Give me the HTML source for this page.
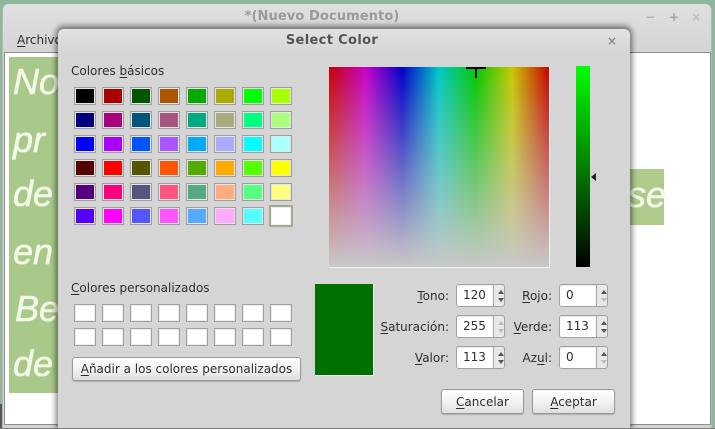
<!DOCTYPE html>
<html><head><meta charset="utf-8">
<style>
html,body{margin:0;padding:0}
body{width:715px;height:429px;overflow:hidden;position:relative;background:#8fb79b;font-family:"DejaVu Sans",sans-serif;font-size:12px;color:#2e2e2e}
div,span.a{position:absolute;box-sizing:border-box}
.t{white-space:nowrap;line-height:16px;height:16px}
.r{text-align:right}
u{text-underline-offset:2px;text-decoration-thickness:1px}
.s{width:22px;height:18px;border:1px solid #9c9c9c;outline:none;box-shadow:inset 0 0 0 1px #e6e6e6}
.c{width:22px;height:18px;border:1px solid #a0a0a0;background:#fff;box-shadow:inset 0 0 0 1px #ececec}
.btn{border:1px solid #9a9a9a;border-radius:3px;background:linear-gradient(#fefefe,#f2f2f2 55%,#dedede);box-shadow:0 1px 1px rgba(0,0,0,.18);text-align:center;white-space:nowrap}
.spin{width:49px;height:23px;border:1px solid #a2a2a2;border-radius:3px;background:#e8e8e8}
.spin .f{left:0;top:0;width:37px;height:21px;background:#fff;border-right:1px solid #a8a8a8;border-radius:2px 0 0 2px;box-shadow:inset 0 1px 1px rgba(0,0,0,.1);line-height:21px;font-size:12px;padding-left:6px}
.up,.dn{left:41px;width:0;height:0;border-left:3px solid transparent;border-right:3px solid transparent}
.up{top:5px;border-bottom:4px solid #555}
.dn{top:13px;border-top:4px solid #555}
.up.o{border-bottom-color:#bdbdbd}.dn.o{border-top-color:#bdbdbd}
.h{font-family:"Liberation Sans",sans-serif;font-style:italic;color:#f4f8e8;-webkit-text-stroke:.6px #f4f8e8;font-size:36px;line-height:40px;white-space:nowrap}
</style></head><body>
<!-- main window -->
<div style="left:2px;top:4px;width:710px;height:425px;background:linear-gradient(#e0e0e0,#d4d4d4 50px);border-radius:6px 6px 0 0;border-left:1px solid #b5b5b5;border-right:1px solid #b5b5b5;border-bottom:1px solid #777"></div>
<div style="left:0;top:404px;width:2px;height:25px;background:#555"></div>
<div class="t" style="left:0;top:9px;width:644px;text-align:center;font-weight:bold;font-size:13px;letter-spacing:.1px;color:#9a9a9a">*(Nuevo Documento)</div>
<div class="t" style="left:644px;top:9px;width:12px;text-align:center;color:#b0b0b0;font-weight:bold">−</div>
<div class="t" style="left:668px;top:9px;width:12px;text-align:center;color:#a4a4a4;font-weight:bold">+</div>
<div class="t" style="left:690px;top:9px;width:12px;text-align:center;color:#bcbcbc;font-weight:bold">×</div>
<div class="t" style="left:17px;top:32px"><u>A</u>rchivo</div>
<!-- content -->
<div style="left:4px;top:52px;width:707px;height:373px;background:#fff;border:1px solid #8e8e8e"></div>
<div style="left:9px;top:57px;width:60px;height:336px;background:#a8c98a"></div>
<div style="left:620px;top:169px;width:44px;height:56px;background:#aecb8c"></div>
<div class="h" style="left:13px;top:62px">No</div>
<div class="h" style="left:13px;top:120px">pr</div>
<div class="h" style="left:13px;top:174px">de</div>
<div class="h" style="left:13px;top:232px">en</div>
<div class="h" style="left:15px;top:289px">Be</div>
<div class="h" style="left:13px;top:344px">de</div>
<div class="h" style="left:628px;top:175px">se</div>
<!-- dialog -->
<div style="left:58px;top:29px;width:572px;height:400px;background:linear-gradient(#e2e2e2,#d5d5d5 26px);border-radius:6px 6px 0 0;box-shadow:0 -1px 6px 2px rgba(0,0,0,.5)"></div>
<div style="left:0;top:428px;width:715px;height:1px;background:#7d7d7d"></div>
<div class="t" style="left:58px;top:33px;width:548px;text-align:center;font-weight:bold;font-size:13px;letter-spacing:.35px;color:#555">Select Color</div>
<div class="t" style="left:606px;top:33px;width:12px;text-align:center;color:#888;font-weight:bold">×</div>
<div class="t" style="left:71px;top:63px">Colores <u>b</u>ásicos</div>
<!-- basic colours -->
<div class="s" style="left:74px;top:87px;background:#000000"></div>
<div class="s" style="left:102px;top:87px;background:#aa0000"></div>
<div class="s" style="left:130px;top:87px;background:#005500"></div>
<div class="s" style="left:158px;top:87px;background:#aa5500"></div>
<div class="s" style="left:186px;top:87px;background:#00aa00"></div>
<div class="s" style="left:214px;top:87px;background:#aaaa00"></div>
<div class="s" style="left:242px;top:87px;background:#00ff00"></div>
<div class="s" style="left:270px;top:87px;background:#aaff00"></div>
<div class="s" style="left:74px;top:111px;background:#00007f"></div>
<div class="s" style="left:102px;top:111px;background:#aa007f"></div>
<div class="s" style="left:130px;top:111px;background:#00557f"></div>
<div class="s" style="left:158px;top:111px;background:#aa557f"></div>
<div class="s" style="left:186px;top:111px;background:#00aa7f"></div>
<div class="s" style="left:214px;top:111px;background:#aaaa7f"></div>
<div class="s" style="left:242px;top:111px;background:#00ff7f"></div>
<div class="s" style="left:270px;top:111px;background:#aaff7f"></div>
<div class="s" style="left:74px;top:135px;background:#0000ff"></div>
<div class="s" style="left:102px;top:135px;background:#aa00ff"></div>
<div class="s" style="left:130px;top:135px;background:#0055ff"></div>
<div class="s" style="left:158px;top:135px;background:#aa55ff"></div>
<div class="s" style="left:186px;top:135px;background:#00aaff"></div>
<div class="s" style="left:214px;top:135px;background:#aaaaff"></div>
<div class="s" style="left:242px;top:135px;background:#00ffff"></div>
<div class="s" style="left:270px;top:135px;background:#aaffff"></div>
<div class="s" style="left:74px;top:159px;background:#550000"></div>
<div class="s" style="left:102px;top:159px;background:#ff0000"></div>
<div class="s" style="left:130px;top:159px;background:#555500"></div>
<div class="s" style="left:158px;top:159px;background:#ff5500"></div>
<div class="s" style="left:186px;top:159px;background:#55aa00"></div>
<div class="s" style="left:214px;top:159px;background:#ffaa00"></div>
<div class="s" style="left:242px;top:159px;background:#55ff00"></div>
<div class="s" style="left:270px;top:159px;background:#ffff00"></div>
<div class="s" style="left:74px;top:183px;background:#55007f"></div>
<div class="s" style="left:102px;top:183px;background:#ff007f"></div>
<div class="s" style="left:130px;top:183px;background:#55557f"></div>
<div class="s" style="left:158px;top:183px;background:#ff557f"></div>
<div class="s" style="left:186px;top:183px;background:#55aa7f"></div>
<div class="s" style="left:214px;top:183px;background:#ffaa7f"></div>
<div class="s" style="left:242px;top:183px;background:#55ff7f"></div>
<div class="s" style="left:270px;top:183px;background:#ffff7f"></div>
<div class="s" style="left:74px;top:207px;background:#5500ff"></div>
<div class="s" style="left:102px;top:207px;background:#ff00ff"></div>
<div class="s" style="left:130px;top:207px;background:#5555ff"></div>
<div class="s" style="left:158px;top:207px;background:#ff55ff"></div>
<div class="s" style="left:186px;top:207px;background:#55aaff"></div>
<div class="s" style="left:214px;top:207px;background:#ffaaff"></div>
<div class="s" style="left:242px;top:207px;background:#55ffff"></div>
<div style="left:269px;top:205px;width:24px;height:22px;border:2px solid #a8a892;background:#fff;box-shadow:inset 0 0 0 1px #eee"></div>
<!-- custom colours -->
<div class="t" style="left:71px;top:280px"><u>C</u>olores personalizados</div>
<div class="c" style="left:74px;top:304px"></div><div class="c" style="left:102px;top:304px"></div><div class="c" style="left:130px;top:304px"></div><div class="c" style="left:158px;top:304px"></div><div class="c" style="left:186px;top:304px"></div><div class="c" style="left:214px;top:304px"></div><div class="c" style="left:242px;top:304px"></div><div class="c" style="left:270px;top:304px"></div>
<div class="c" style="left:74px;top:328px"></div><div class="c" style="left:102px;top:328px"></div><div class="c" style="left:130px;top:328px"></div><div class="c" style="left:158px;top:328px"></div><div class="c" style="left:186px;top:328px"></div><div class="c" style="left:214px;top:328px"></div><div class="c" style="left:242px;top:328px"></div><div class="c" style="left:270px;top:328px"></div>
<div class="btn" style="left:72px;top:357px;width:229px;height:24px;line-height:22px"><u>A</u>ñadir a los colores personalizados</div>
<!-- picker -->
<div style="left:329px;top:67px;width:221px;height:201px;background:linear-gradient(transparent,#c8c8c8),linear-gradient(90deg,#c80000,#c800c8,#0000c8,#00c8c8,#00c800,#c8c800,#c80000);background-origin:padding-box;border-right:1px solid #f4f4f4;border-bottom:1px solid #f4f4f4"></div>
<div style="left:466px;top:67px;width:20px;height:2px;background:#000"></div>
<div style="left:475px;top:67px;width:2px;height:11px;background:#000"></div>
<div style="left:576px;top:66px;width:14px;height:201px;background:linear-gradient(#00ff00,#000)"></div>
<div style="left:591px;top:173px;width:0;height:0;border-top:4px solid transparent;border-bottom:4px solid transparent;border-right:5px solid #222"></div>
<!-- preview -->
<div style="left:315px;top:284px;width:59px;height:92px;background:#007100;border-right:1px solid #f2f2f2;border-bottom:1px solid #f2f2f2"></div>
<!-- labels -->
<div class="t r" style="left:361px;top:288px;width:88px"><u>T</u>ono:</div>
<div class="t r" style="left:361px;top:319px;width:88px"><u>S</u>aturación:</div>
<div class="t r" style="left:361px;top:350px;width:88px"><u>V</u>alor:</div>
<div class="t r" style="left:501px;top:288px;width:51px"><u>R</u>ojo:</div>
<div class="t r" style="left:501px;top:319px;width:51px"><u>V</u>erde:</div>
<div class="t r" style="left:501px;top:350px;width:51px">Az<u>u</u>l:</div>
<!-- spins -->
<div class="spin" style="left:456px;top:284px"><div class="f">120</div><div class="up"></div><div class="dn"></div></div>
<div class="spin" style="left:456px;top:315px"><div class="f">255</div><div class="up o"></div><div class="dn o"></div></div>
<div class="spin" style="left:456px;top:346px"><div class="f">113</div><div class="up"></div><div class="dn"></div></div>
<div class="spin" style="left:559px;top:284px"><div class="f">0</div><div class="up"></div><div class="dn o"></div></div>
<div class="spin" style="left:559px;top:315px"><div class="f">113</div><div class="up"></div><div class="dn"></div></div>
<div class="spin" style="left:559px;top:346px"><div class="f">0</div><div class="up"></div><div class="dn o"></div></div>
<!-- buttons -->
<div class="btn" style="left:441px;top:389px;width:83px;height:25px;line-height:24px"><u>C</u>ancelar</div>
<div class="btn" style="left:532px;top:389px;width:83px;height:25px;line-height:24px"><u>A</u>ceptar</div>
</body></html>
